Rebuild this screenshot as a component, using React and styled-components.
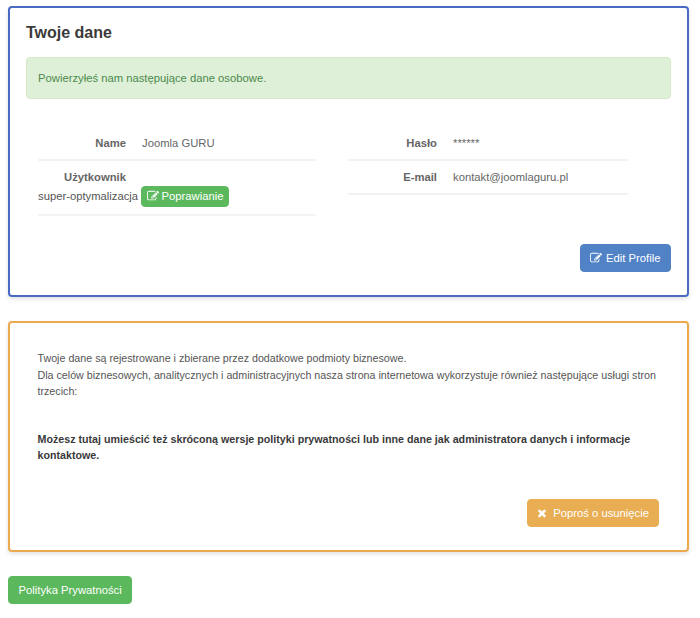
import styled, { createGlobalStyle } from "styled-components";

const GlobalStyle = createGlobalStyle`
  * {
    box-sizing: border-box;
  }

  body {
    margin: 0;
    background: #fff;
    font-family: "Liberation Sans", Arial, sans-serif;
    font-size: 11.25px;
    line-height: 16.5px;
    color: #555;
  }
`;

const Page = styled.div`
  display: flex;
  flex-direction: column;
  align-items: flex-start;
  padding: 6px 11px 14px 8px;
`;

const Panel = styled.section`
  width: 100%;
  height: ${(p) => p.$height}px;
  margin-bottom: 24px;
  border: 2px solid ${(p) => p.$color};
  border-radius: 4px;
  background: #fff;
  box-shadow: 0 2px 4px rgba(0, 0, 0, 0.12);
  display: flex;
  flex-direction: column;
`;

const ProfilePanel = styled(Panel)`
  padding: 15px 16px 23.5px;
`;

const NoticePanel = styled(Panel)`
  padding: 27px 28px 23.5px 27.5px;
  font-size: 10.7px;
`;

const Title = styled.h2`
  margin: 0 0 14px;
  font-size: 16px;
  line-height: 20px;
  font-weight: 700;
  color: #3a3a3a;
`;

const Alert = styled.div`
  height: 42px;
  padding: 12px 11px;
  background: #dff0d8;
  border: 1px solid #d6e9c6;
  border-radius: 4px;
  color: #4a8a4b;
`;

const Columns = styled.div`
  display: flex;
  gap: 32px;
  margin-top: 26px;
  padding-left: 12px;
`;

const Column = styled.div`
  width: ${(p) => p.$width}px;
`;

const Row = styled.div`
  display: flex;
  align-items: center;
  height: ${(p) => p.$height || 36}px;
  padding-top: ${(p) => (p.$height ? 0 : 2)}px;
  border-bottom: 2px solid #f2f2f2;
`;

const StackRow = styled.div`
  height: 55px;
  padding-top: 8px;
  border-bottom: 2px solid #f4f4f4;
`;

const Label = styled.div`
  width: ${(p) => p.$width || 88}px;
  flex: none;
  text-align: right;
  font-weight: 700;
  color: #666;
`;

const Value = styled.div`
  margin-left: 16px;
  color: #666;
`;

const StackValue = styled.div`
  display: flex;
  align-items: center;
  gap: 3px;
  color: #555;
`;

const Footer = styled.div`
  display: flex;
  justify-content: flex-end;
  margin-top: auto;
`;

const Button = styled.button`
  display: inline-flex;
  align-items: center;
  justify-content: center;
  gap: ${(p) => p.$gap || 4}px;
  height: ${(p) => p.$height || 28}px;
  padding: 0 ${(p) => p.$pad || 9.5}px 0 ${(p) => p.$padLeft || p.$pad || 9.5}px;
  background: ${(p) => p.$bg};
  border: 1px solid ${(p) => p.$bg};
  border-radius: 4px;
  color: #fff;
  font-family: inherit;
  font-size: 11.25px;
  line-height: 16px;
  cursor: pointer;
`;

const Icon = styled.svg`
  flex: none;
  width: 12px;
  height: 12px;
  fill: currentColor;
`;

const Paragraph = styled.p`
  margin: 0 0 ${(p) => p.$after || 0}px;
  color: #555;
`;

const Strong = styled.p`
  margin: 0;
  font-weight: 700;
  color: #3a3a3a;
`;

function EditIcon() {
  return (
    <Icon viewBox="0 0 1792 1792">
      <path d="M888 1184l116-116-152-152-116 116v56h96v96h56zm440-720q-16-16-33 1l-350 350q-17 17-1 33t33-1l350-350q17-17 1-33zm80 594v190q0 119-84.5 203.5t-203.5 84.5h-832q-119 0-203.5-84.5t-84.5-203.5v-832q0-119 84.5-203.5t203.5-84.5h832q63 0 117 25 15 7 18 23 3 17-9 29l-49 49q-14 14-32 8-23-6-45-6h-832q-66 0-113 47t-47 113v832q0 66 47 113t113 47h832q66 0 113-47t47-113v-126q0-13 9-22l64-64q15-15 35-7t20 29zm-96-738l288 288-672 672h-288v-288zm444 132l-92 92-288-288 92-92q28-28 68-28t68 28l152 152q28 28 28 68t-28 68z" />
    </Icon>
  );
}

function CloseIcon() {
  return (
    <Icon viewBox="0 0 1792 1792">
      <path d="M1490 1322q0 40-28 68l-136 136q-28 28-68 28t-68-28l-294-294-294 294q-28 28-68 28t-68-28l-136-136q-28-28-28-68t28-68l294-294-294-294q-28-28-28-68t28-68l136-136q28-28 68-28t68 28l294 294 294-294q28-28 68-28t68 28l136 136q28 28 28 68t-28 68l-294 294 294 294q28 28 28 68z" />
    </Icon>
  );
}

export default function App() {
  return (
    <>
      <GlobalStyle />
      <Page>
        <ProfilePanel $color="#4a6bc4" $height={291}>
          <Title>Twoje dane</Title>
          <Alert>Powierzyłeś nam następujące dane osobowe.</Alert>
          <Columns>
            <Column $width={278}>
              <Row>
                <Label>Name</Label>
                <Value>Joomla GURU</Value>
              </Row>
              <StackRow>
                <Label>Użytkownik</Label>
                <StackValue>
                  super-optymalizacja
                  <Button $bg="#5cb85c" $height={21} $pad={4.5} $gap={3}>
                    <EditIcon /> Poprawianie
                  </Button>
                </StackValue>
              </StackRow>
            </Column>
            <Column $width={280}>
              <Row>
                <Label $width={89}>Hasło</Label>
                <Value>******</Value>
              </Row>
              <Row $height={34}>
                <Label $width={89}>E-mail</Label>
                <Value>kontakt@joomlaguru.pl</Value>
              </Row>
            </Column>
          </Columns>
          <Footer>
            <Button $bg="#5182c6">
              <EditIcon /> Edit Profile
            </Button>
          </Footer>
        </ProfilePanel>
        <NoticePanel $color="#ebaa50" $height={231}>
          <Paragraph>Twoje dane są rejestrowane i zbierane przez dodatkowe podmioty biznesowe.</Paragraph>
          <Paragraph $after={31}>
            Dla celów biznesowych, analitycznych i administracyjnych nasza strona internetowa wykorzystuje również następujące usługi stron trzecich:
          </Paragraph>
          <Strong>
            Możesz tutaj umieścić też skróconą wersje polityki prywatności lub inne dane jak administratora danych i informacje kontaktowe.
          </Strong>
          <Footer>
            <Button $bg="#e9ad53" $pad={9} $padLeft={7.5} $gap={5.5}>
              <CloseIcon /> Poproś o usunięcie
            </Button>
          </Footer>
        </NoticePanel>
        <Button $bg="#5cb85c">Polityka Prywatności</Button>
      </Page>
    </>
  );
}
